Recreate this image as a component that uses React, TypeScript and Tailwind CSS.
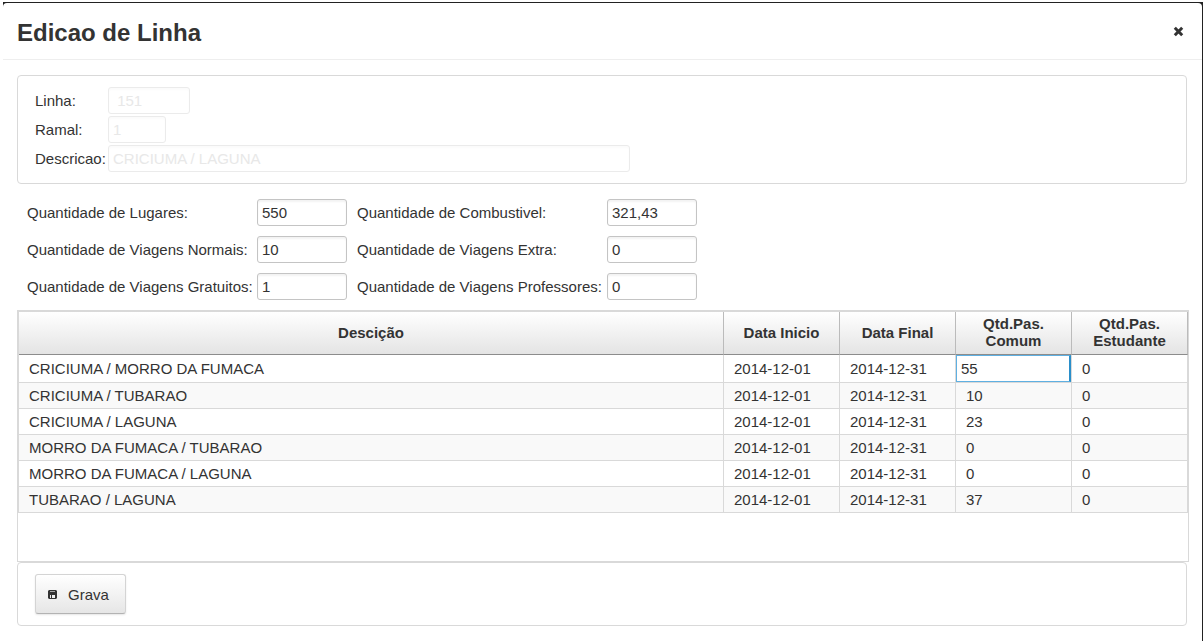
interface Route {
  description: string,
  start: string,
  end: string,
  regular: string,
  student: string,
};

interface FieldProps {
  id: string,
  label: string,
  value: string,
};

const lineFields = [
  { id: 'linha', label: 'Linha:', value: ' 151', width: 'w-[82px]' },
  { id: 'ramal', label: 'Ramal:', value: '1', width: 'w-[58px]' },
  { id: 'descricao', label: 'Descricao:', value: 'CRICIUMA / LAGUNA', width: 'w-[522px]' },
];

const quantityFields: FieldProps[] = [
  { id: 'lugares', label: 'Quantidade de Lugares:', value: '550' },
  { id: 'combustivel', label: 'Quantidade de Combustivel:', value: '321,43' },
  { id: 'normais', label: 'Quantidade de Viagens Normais:', value: '10' },
  { id: 'extra', label: 'Quantidade de Viagens Extra:', value: '0' },
  { id: 'gratuitos', label: 'Quantidade de Viagens Gratuitos:', value: '1' },
  { id: 'professores', label: 'Quantidade de Viagens Professores:', value: '0' },
];

const routes: Route[] = [
  { description: 'CRICIUMA / MORRO DA FUMACA', start: '2014-12-01', end: '2014-12-31', regular: '55', student: '0' },
  { description: 'CRICIUMA / TUBARAO', start: '2014-12-01', end: '2014-12-31', regular: '10', student: '0' },
  { description: 'CRICIUMA / LAGUNA', start: '2014-12-01', end: '2014-12-31', regular: '23', student: '0' },
  { description: 'MORRO DA FUMACA / TUBARAO', start: '2014-12-01', end: '2014-12-31', regular: '0', student: '0' },
  { description: 'MORRO DA FUMACA / LAGUNA', start: '2014-12-01', end: '2014-12-31', regular: '0', student: '0' },
  { description: 'TUBARAO / LAGUNA', start: '2014-12-01', end: '2014-12-31', regular: '37', student: '0' },
];

const CloseIcon = () => (
  <svg width="11" height="11" viewBox="0 0 11 11" fill="none" stroke="#333" strokeWidth="3" aria-hidden="true">
    <path d="M1.8 1.8 9.2 9.2M9.2 1.8 1.8 9.2" />
  </svg>
);

const SaveIcon = () => (
  <svg width="10" height="10" viewBox="0 0 10 10" aria-hidden="true">
    <path
      fill="#333"
      fillRule="evenodd"
      d="M1 0H8L9 1V8L8 9H1L0 8V1ZM2 5V8H3V5ZM4 5V8H7V5Z"
    />
    <path fill="#a8a8a8" d="M2 1H7V2H2Z" />
  </svg>
);

const QuantityField = (props: FieldProps) => {
  const { id, label, value } = props;

  return (
    <>
      <label htmlFor={id} className="whitespace-nowrap">{label}</label>
      <input
        id={id}
        defaultValue={value}
        className="h-[27px] w-full rounded-[3px] border border-[#c4c4c4] bg-white px-1 shadow-[inset_0_2px_2px_#f3f3f3] outline-none"
      />
    </>
  );
};

const RoutesTable = () => {
  const head = 'h-[43px] border-r border-b border-r-[#bbbbbb] border-b-[#8c8c8c] px-0 pt-0 pb-[2px] text-center font-bold leading-[17px] bg-linear-to-b from-white to-[#e4e4e4]';
  const cell = 'border-r border-b border-[#d9d9d9] px-[10px] py-0';

  return (
    <div className="min-h-[252px] border border-[#d9d9d9]">
      <table className="w-full table-fixed border-separate border-spacing-0 border-t border-l border-[#d9d9d9]">
        <thead>
          <tr>
            <th className={head}>Descição</th>
            <th className={`${head} w-[116px]`}>Data Inicio</th>
            <th className={`${head} w-[116px]`}>Data Final</th>
            <th className={`${head} w-[116px]`}>Qtd.Pas.<br />Comum</th>
            <th className={`${head} w-[116px]`}>Qtd.Pas.<br />Estudante</th>
          </tr>
        </thead>
        <tbody>
          {
            routes.map((route, i) => (
              <tr
                key={route.description}
                className={`${i == 0 ? 'h-[28px]' : 'h-[26px]'} ${i % 2 == 1 ? 'bg-[#f9f9f9]' : 'bg-white'}`}
              >
                <td className={cell}>{route.description}</td>
                <td className={cell}>{route.start}</td>
                <td className={cell}>{route.end}</td>
                {
                  i == 0 ?
                  <td className="border-r border-b border-[#d9d9d9] p-0">
                    <input
                      aria-label="Qtd.Pas. Comum"
                      defaultValue={route.regular}
                      className="block h-[27px] w-full border border-r-2 border-t-[#5fb0e2] border-b-[#5fb0e2] border-l-[#5fb0e2] border-r-[#2a8fca] bg-white px-1 outline-none"
                    />
                  </td> :
                  <td className={cell}>{route.regular}</td>
                }
                <td className={cell}>{route.student}</td>
              </tr>
            ))
          }
        </tbody>
      </table>
    </div>
  );
};

const App = () => {
  return (
    <div className="flex min-h-screen bg-white pt-[2px] pl-[3px] font-['Liberation_Sans',Arial,sans-serif] text-[15px] leading-[18px] text-[#333333]">
      <div className="flex flex-1 bg-[#222222] pt-px pr-px">
        <section className="min-w-0 flex-1 rounded-t-[4px] bg-white">

          {/* Title bar */}
          <header className="flex h-[57px] items-center justify-between border-b border-[#eeeeee] pt-[3px] pr-[18px] pl-[14px]">
            <h1 className="text-[24px] leading-[28px] font-bold">Edicao de Linha</h1>
            <button type="button" aria-label="Fechar" className="pb-[3px]"><CloseIcon /></button>
          </header>

          <form className="pt-[15px] pr-[13px] pb-[15px] pl-[14px]">

            {/* Line */}
            <div className="mr-[2px] flex flex-col gap-[2px] rounded-[4px] border border-[#d9d9d9] px-[17px] py-[11px]">
              {
                lineFields.map((field) => (
                  <div key={field.id} className="flex items-center">
                    <label htmlFor={field.id} className="w-[73px] shrink-0">{field.label}</label>
                    <input
                      id={field.id}
                      disabled
                      defaultValue={field.value}
                      className={`${field.width} h-[27px] rounded-[3px] border border-[#ebebeb] bg-white px-1 text-[#e8e8e8] shadow-[inset_0_2px_2px_#fbfbfb]`}
                    />
                  </div>
                ))
              }
            </div>

            {/* Quantities */}
            <div className="grid grid-cols-[220px_90px_240px_90px] items-center gap-[10px] pt-[15px] pb-[10px] pl-[10px]">
              {
                quantityFields.map((field) => (
                  <QuantityField key={field.id} {...field} />
                ))
              }
            </div>

            <RoutesTable />

            {/* Actions */}
            <div className="mr-[2px] rounded-[4px] border border-[#d9d9d9] px-[17px] py-[11px]">
              <button
                type="button"
                className="flex h-[40px] items-center gap-[10px] rounded-[3px] border border-[#d4d4d4] border-b-[#b3b3b3] bg-linear-to-b from-white to-[#e6e6e6] pt-[2px] pr-[16px] pl-[12px] shadow-[0_1px_2px_#e6e6e6]"
              >
                <SaveIcon />
                Grava
              </button>
            </div>

          </form>
        </section>
      </div>
    </div>
  );
};

export default App;
